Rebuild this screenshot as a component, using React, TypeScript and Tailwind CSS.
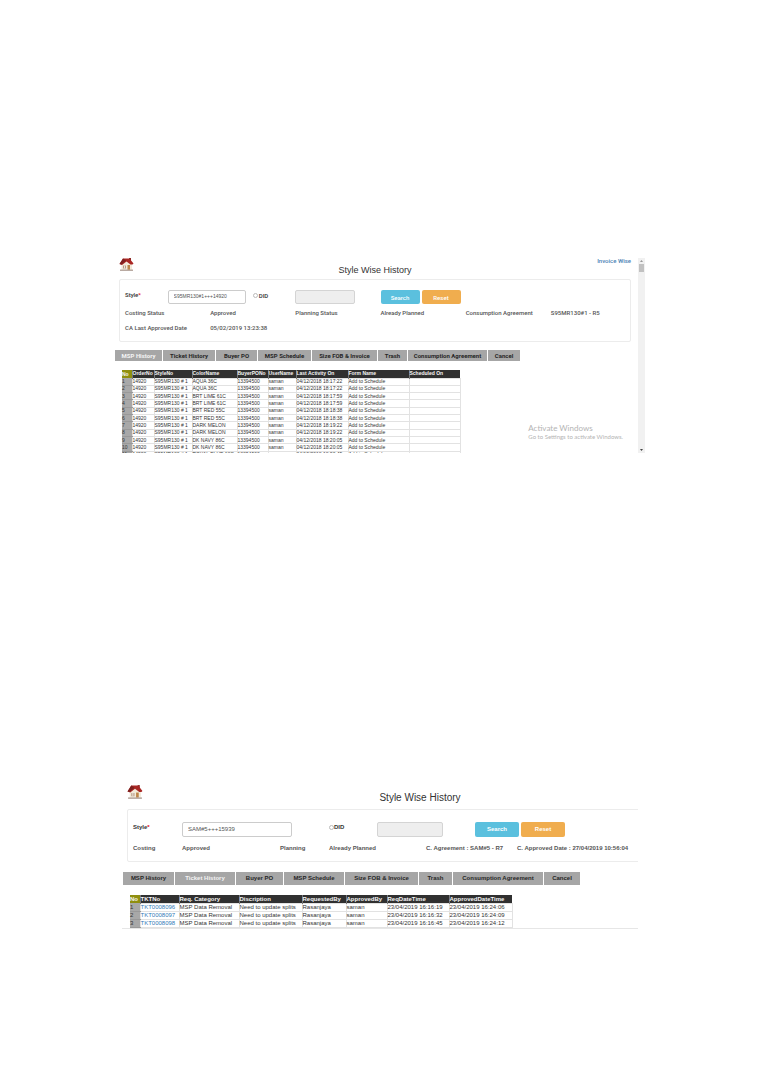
import React from 'react';

const tabs = [
  'MSP History',
  'Ticket History',
  'Buyer PO',
  'MSP Schedule',
  'Size FOB & Invoice',
  'Trash',
  'Consumption Agreement',
  'Cancel',
];

const activityHeads = [
  'No', 'OrderNo', 'StyleNo', 'ColorName', 'BuyerPONo', 'UserName', 'Last Activity On', 'Form Name', 'Scheduled On',
];

const activity = [
  ['AQUA 36C', '04/12/2018 18:17:22'],
  ['AQUA 36C', '04/12/2018 18:17:22'],
  ['BRT LIME 61C', '04/12/2018 18:17:59'],
  ['BRT LIME 61C', '04/12/2018 18:17:59'],
  ['BRT RED 55C', '04/12/2018 18:18:38'],
  ['BRT RED 55C', '04/12/2018 18:18:38'],
  ['DARK MELON', '04/12/2018 18:19:22'],
  ['DARK MELON', '04/12/2018 18:19:22'],
  ['DK NAVY 86C', '04/12/2018 18:20:05'],
  ['DK NAVY 86C', '04/12/2018 18:20:05'],
  ['ROYAL BLUE 18C', '04/12/2018 18:20:45'],
];

const ticketHeads = [
  'No', 'TKTNo', 'Req. Category', 'Discription', 'RequestedBy', 'ApprovedBy', 'ReqDateTime', 'ApprovedDateTime',
];

const tickets = [
  ['TKT0008096', '23/04/2019 16:16:19', '23/04/2019 16:24:06'],
  ['TKT0008097', '23/04/2019 16:16:32', '23/04/2019 16:24:09'],
  ['TKT0008098', '23/04/2019 16:16:45', '23/04/2019 16:24:12'],
];

function House({ className }: { className: string }) {
  return (
    <svg viewBox="0 0 30 30" className={className} aria-hidden="true">
      <path d="M5 14 15 5l11 9v12H5z" fill="#f2ead9" />
      <path d="M20 2h4v8h-4z" fill="#8c2b27" />
      <path d="M8 3h13l8 10-2 2h-4l-8-6-9 7-5-2z" fill="#a92724" />
      <path d="m8 3 6 4-9 8-4-1z" fill="#7e201f" />
      <path d="M17 16h5v10h-5z" fill="#bd8549" />
      <path d="M8 17h6v6H8z" fill="#b99a84" />
      <path d="M10 17h2v6h-2z" fill="#ece4df" />
      <path d="M2 25h26v3H2z" fill="#b9aaa2" />
    </svg>
  );
}

function Tabs({ active, className }: { active: string; className: string }) {
  return (
    <nav className={`grid gap-px font-bold ${className}`}>
      {tabs.map((t) => (
        <button
          key={t}
          type="button"
          className={`whitespace-nowrap bg-[#a6a6a6] text-center ${t === active ? 'text-[#f4f4f4]' : 'text-[#262626]'}`}
        >
          {t}
        </button>
      ))}
    </nav>
  );
}

function HeadRow({ heads }: { heads: string[] }) {
  return (
    <thead>
      <tr className="h-[8px]">
        {heads.map((h, i) => (
          <th
            key={h}
            className={`p-0 text-left font-bold text-[#f5f5f5] ${
              i === 0 ? 'bg-[#8f8f10]' : 'border-l border-[#777] bg-[#303030]'
            }`}
          >
            {h}
          </th>
        ))}
      </tr>
    </thead>
  );
}

const cell = 'border border-[#e2e2e2] p-0';
const numberCell = 'border-b border-[#999] bg-[#a8a8a8] p-0';

function MspHistory() {
  return (
    <section className="mr-[116px] ml-[115px] flex h-[196px] overflow-hidden">
      <div className="relative min-w-0 flex-1 overflow-hidden">
        <div className="mr-[7px] ml-1">
          <header className="grid h-[22px] grid-cols-[1fr_auto_1fr]">
            <House className="size-[15px]" />
            <h1 className="self-end text-[9px] leading-[18px] text-[#333]">Style Wise History</h1>
            <a
              href="#invoice"
              className="justify-self-end font-[Roboto,sans-serif] text-[6px] leading-[8px] font-medium text-[#4a82b4]"
            >
              Invoice Wise
            </a>
          </header>
          <form className="h-[63px] rounded-xs border border-[#ececec] pt-[10px] pl-[5px] font-[Roboto,sans-serif] text-[6px] font-medium text-[#555]">
            <div className="-mr-[6px] grid h-[14px] grid-cols-12">
              <label htmlFor="style1" className="pt-[1px] leading-[8px] text-[#333]">
                Style<span className="text-red-600">*</span>
              </label>
              <input
                id="style1"
                defaultValue="S95MR130#1+++14920"
                className="col-span-2 mr-[7px] rounded-xs border border-[#ccc] px-[5px] font-['Liberation_Sans',sans-serif] text-[5px] font-normal text-[#555]"
              />
              <label className="flex h-[10px] items-center gap-px text-[#333]">
                <input type="radio" className="size-[5px] appearance-none rounded-full border border-[#bbb] bg-white" />
                DID
              </label>
              <input
                aria-label="DID value"
                disabled
                className="col-start-5 col-end-7 mr-[26px] rounded-xs border border-[#d4d4d4] bg-[#eee]"
              />
              <div className="col-span-3 flex gap-[2px] text-white">
                <button type="button" className="w-[39px] rounded-xs bg-[#5bc0de]">Search</button>
                <button type="button" className="w-[39px] rounded-xs bg-[#f0ad4e]">Reset</button>
              </div>
            </div>
            <div className="mt-[5px] -mr-[6px] grid grid-cols-6 gap-y-[7px] leading-[8px] whitespace-nowrap">
              <span>Costing Status</span>
              <span>Approved</span>
              <span>Planning Status</span>
              <span>Already Planned</span>
              <span>Consumption Agreement</span>
              <span>S95MR130#1 - R5</span>
              <span>CA Last Approved Date</span>
              <span>05/02/2019 13:23:38</span>
            </div>
          </form>
        </div>
        <Tabs
          active="MSP History"
          className="mt-[8px] h-[11px] grid-cols-[47px_52px_41px_53px_65px_29px_79px_32px] font-[Roboto,sans-serif] text-[6px]"
        />
        <table className="mt-[9px] ml-[7px] h-[89px] w-[338px] table-fixed border-collapse text-[5px] leading-[5px] whitespace-nowrap text-[#333]">
          <colgroup>
            <col className="w-[10px]" />
            <col className="w-[22px]" />
            <col className="w-[38px]" />
            <col className="w-[45px]" />
            <col className="w-[31px]" />
            <col className="w-[28px]" />
            <col className="w-[52px]" />
            <col className="w-[61px]" />
            <col className="w-[51px]" />
          </colgroup>
          <HeadRow heads={activityHeads} />
          <tbody>
            {activity.map(([color, when], i) => (
              <tr key={i}>
                <td className={numberCell}>{i + 1}</td>
                <td className={cell}>14920</td>
                <td className={cell}>S95MR130 # 1</td>
                <td className={cell}>{color}</td>
                <td className={cell}>13394500</td>
                <td className={cell}>saman</td>
                <td className={cell}>{when}</td>
                <td className={cell}>Add to Schedule</td>
                <td className={cell}></td>
              </tr>
            ))}
          </tbody>
        </table>
        <div className="absolute right-[15px] bottom-[12px] font-[Lato,sans-serif] text-[#b4b4b4]">
          <p className="text-[8px] leading-[9px]">Activate Windows</p>
          <p className="text-[6px] leading-[8px]">Go to Settings to activate Windows.</p>
        </div>
      </div>
      <div className="mt-px flex w-[7px] flex-col items-center justify-between bg-[#f1f1f1]" aria-hidden="true">
        <div className="flex flex-col items-center">
          <svg viewBox="0 0 7 6" className="h-[6px] w-[7px]"><path d="M2 4h3L3.500 2z" fill="#999" /></svg>
          <div className="h-[8px] w-[5px] bg-[#c1c1c1]" />
        </div>
        <svg viewBox="0 0 7 6" className="h-[6px] w-[7px]"><path d="M2 2h3L3.500 4z" fill="#444" /></svg>
      </div>
    </section>
  );
}

function TicketHistory() {
  return (
    <section className="mt-[331px] mr-[123px] ml-[122px] overflow-hidden border-b border-[#e6e6e6]">
      <div className="ml-[5px] w-[586px]">
        <header className="grid h-[25px] grid-cols-[1fr_auto_1fr]">
          <House className="size-[16px]" />
          <h2 className="self-end text-[10px] leading-[22px] text-[#333]">Style Wise History</h2>
        </header>
        <form className="h-[53px] rounded-xs border border-[#ececec] pt-[12px] pl-[5px] text-[6px] font-bold text-[#555]">
          <div className="grid h-[15px] grid-cols-[49px_147px_48px_98px_1fr]">
            <label htmlFor="style2" className="leading-[10px] text-[#333]">
              Style<span className="text-red-600">*</span>
            </label>
            <input
              id="style2"
              defaultValue="SAM#5+++15939"
              className="mr-[37px] rounded-xs border border-[#ccc] px-[5px] font-normal text-[#555]"
            />
            <label className="flex h-[11px] items-center text-[#333]">
              <input type="radio" className="size-[5px] appearance-none rounded-full border border-[#bbb] bg-white" />
              DID
            </label>
            <input
              aria-label="DID value"
              disabled
              className="mr-[32px] rounded-xs border border-[#d4d4d4] bg-[#eee]"
            />
            <div className="flex gap-[2px] text-white">
              <button type="button" className="w-[44px] rounded-xs bg-[#5bc0de]">Search</button>
              <button type="button" className="w-[44px] rounded-xs bg-[#f0ad4e]">Reset</button>
            </div>
          </div>
          <div className="mt-[7px] grid grid-cols-[49px_98px_49px_97px_91px_1fr] leading-[9px] whitespace-nowrap">
            <span>Costing</span>
            <span>Approved</span>
            <span>Planning</span>
            <span>Already Planned</span>
            <span>C. Agreement : SAM#5 - R7</span>
            <span>C. Approved Date : 27/04/2019 10:56:04</span>
          </div>
        </form>
      </div>
      <Tabs
        active="Ticket History"
        className="mt-[10px] ml-px h-[13px] grid-cols-[51px_60px_47px_60px_73px_33px_90px_36px] text-[6px]"
      />
      <table className="mt-[10px] ml-[8px] h-[33px] w-[382px] table-fixed border-collapse text-[6px] leading-[6px] whitespace-nowrap text-[#333]">
        <colgroup>
          <col className="w-[10px]" />
          <col className="w-[39px]" />
          <col className="w-[60px]" />
          <col className="w-[63px]" />
          <col className="w-[44px]" />
          <col className="w-[41px]" />
          <col className="w-[62px]" />
          <col className="w-[63px]" />
        </colgroup>
        <HeadRow heads={ticketHeads} />
        <tbody>
          {tickets.map(([no, requested, approved], i) => (
            <tr key={no}>
              <td className={numberCell}>{i + 1}</td>
              <td className={cell}>
                <a href={`#${no}`} className="text-[#337ab7]">{no}</a>
              </td>
              <td className={cell}>MSP Data Removal</td>
              <td className={cell}>Need to update splits</td>
              <td className={cell}>Rasanjaya</td>
              <td className={cell}>saman</td>
              <td className={cell}>{requested}</td>
              <td className={cell}>{approved}</td>
            </tr>
          ))}
        </tbody>
      </table>
    </section>
  );
}

export default function App() {
  return (
    <main className="min-h-screen bg-white pt-[257px] pb-[146px] font-['Liberation_Sans',Arial,sans-serif]">
      <MspHistory />
      <TicketHistory />
    </main>
  );
}
